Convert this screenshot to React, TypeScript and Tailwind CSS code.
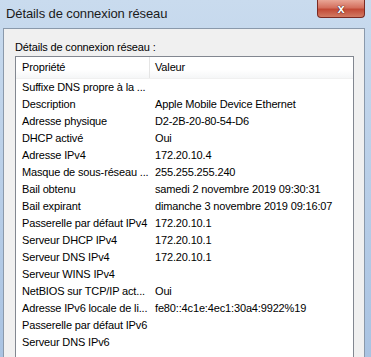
import React from "react";

const rows: [string, string][] = [
  ["Suffixe DNS propre à la ...", ""],
  ["Description", "Apple Mobile Device Ethernet"],
  ["Adresse physique", "D2-2B-20-80-54-D6"],
  ["DHCP activé", "Oui"],
  ["Adresse IPv4", "172.20.10.4"],
  ["Masque de sous-réseau ...", "255.255.255.240"],
  ["Bail obtenu", "samedi 2 novembre 2019 09:30:31"],
  ["Bail expirant", "dimanche 3 novembre 2019 09:16:07"],
  ["Passerelle par défaut IPv4", "172.20.10.1"],
  ["Serveur DHCP IPv4", "172.20.10.1"],
  ["Serveur DNS IPv4", "172.20.10.1"],
  ["Serveur WINS IPv4", ""],
  ["NetBIOS sur TCP/IP act...", "Oui"],
  ["Adresse IPv6 locale de li...", "fe80::4c1e:4ec1:30a4:9922%19"],
  ["Passerelle par défaut IPv6", ""],
  ["Serveur DNS IPv6", ""],
];

export default function App() {
  return (
    <div
      className="w-[371px] h-[357px] overflow-hidden flex flex-col bg-[linear-gradient(180deg,#c9dbee_0%,#bcd1e9_40%,#a9c3e2_100%)]"
      style={{ fontFamily: '"Liberation Sans", Arial, sans-serif' }}
    >
      <div className="h-[28px] flex items-start justify-between shrink-0">
        <div className="pl-[6px] pt-[5px] text-[13px] leading-[17px] tracking-[-0.1px] text-[#1b1b1b]">
          Détails de connexion réseau
        </div>
        <div className="mr-[6px] w-[48px] h-[18px] rounded-b-[4px] border border-t-0 border-[#7a2a22] bg-[linear-gradient(180deg,#e9a696_0%,#d4705e_45%,#c24a36_55%,#d27a62_100%)] flex items-center justify-center">
          <span
            className="text-white font-bold text-[13px] leading-none"
            style={{ textShadow: "0 0 1px #3a1010, 0 0 1px #3a1010" }}
          >
            x
          </span>
        </div>
      </div>
      <div className="flex-1 ml-[3px] mr-[6px] border border-b-0 border-[#8a99ab] bg-[#f0f0f0] flex flex-col pl-[11px] pr-[10px] text-[11px] tracking-[-0.15px]">
        <div className="pt-[12px] h-[27px] leading-[13px] text-black">
          Détails de connexion réseau :
        </div>
        <div className="flex-1 border border-b-0 border-[#828790] bg-white text-black">
          <div className="h-[22px] flex border-b border-[#f0f0f0] bg-[linear-gradient(180deg,#ffffff_0%,#ffffff_60%,#f5f6f7_100%)]">
            <div className="w-[134px] pl-[6px] flex items-center border-r border-[#e5e5e5]">
              Propriété
            </div>
            <div className="pl-[5px] flex items-center">Valeur</div>
          </div>
          <div>
            {rows.map(([k, v], i) => (
              <div key={i} className="h-[17px] flex items-center whitespace-nowrap">
                <div className="w-[134px] pl-[6px]">{k}</div>
                <div className="pl-[5px]">{v}</div>
              </div>
            ))}
          </div>
        </div>
      </div>
    </div>
  );
}
